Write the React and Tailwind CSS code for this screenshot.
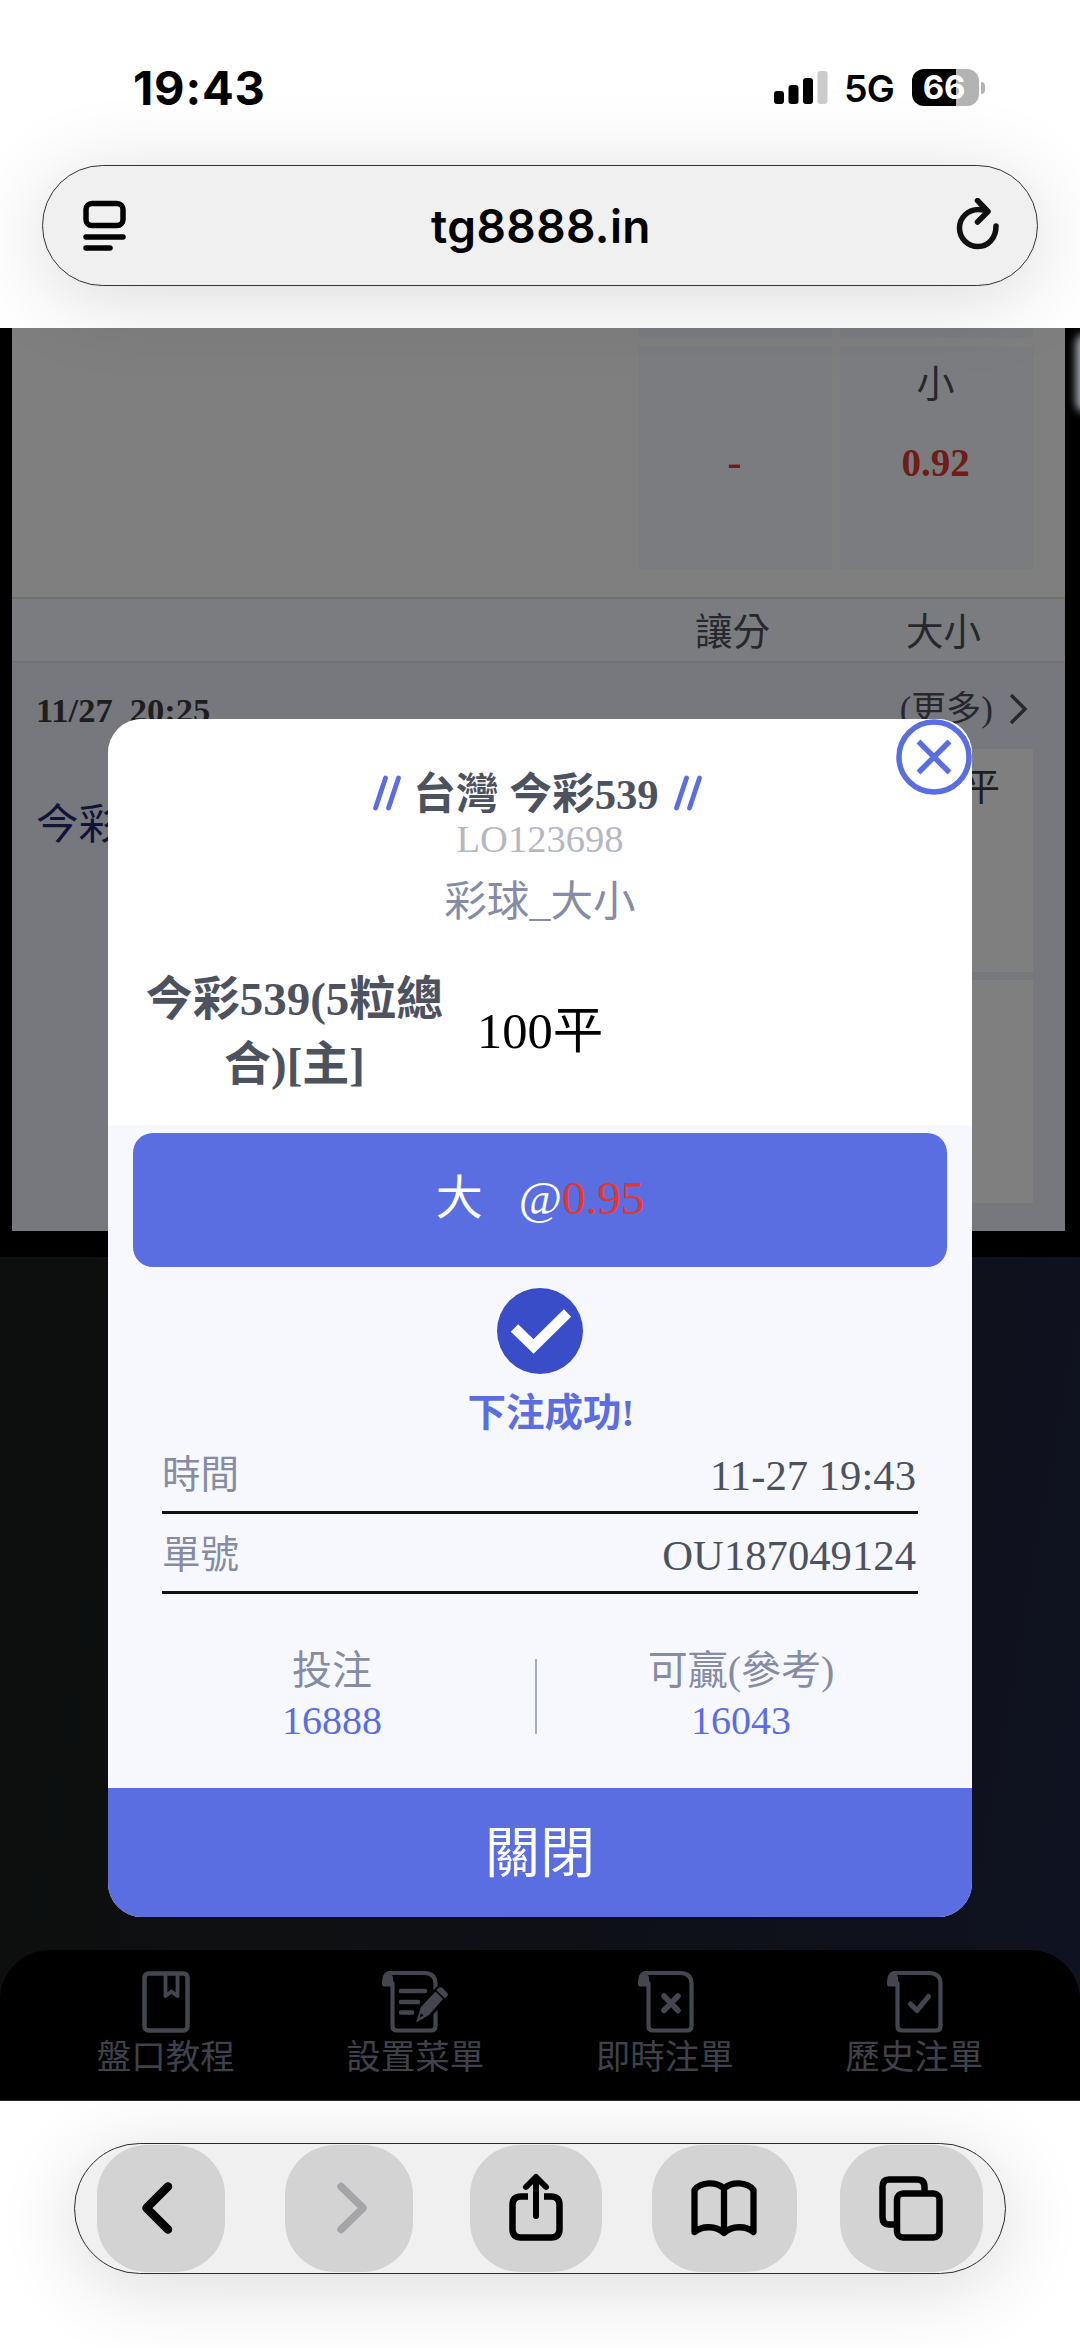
import React from "react";

const SERIF = "font-['Liberation_Serif','Noto_Sans_CJK_TC',serif]";

function StatusBar() {
  return (
    <div className="flex h-[165px] items-start justify-between pt-[60px] pr-[95px] pl-[133px]">
      <div className="text-[47px] leading-[55px] font-bold tracking-[0.8px]">19:43</div>
      <div className="flex h-[55px] items-center">
        <svg width="54" height="34" viewBox="0 0 54 34">
          <rect x="0" y="20" width="10" height="13" rx="3" />
          <rect x="14.500" y="14" width="10" height="19" rx="3" />
          <rect x="29" y="7" width="10" height="26" rx="3" />
          <rect x="43.500" y="0" width="10" height="33" rx="3" fill="#cbcbcb" />
        </svg>
        <div className="ml-[16px] w-[51px] pt-[2px] text-[37.500px] leading-[55px] font-semibold tracking-[-0.8px]">5G</div>
        <div className="ml-[17px] flex h-[37px] w-[67px] items-center justify-center rounded-[12px] bg-[linear-gradient(90deg,#000_66%,#b3b3b3_66%)] pr-[3px]">
          <span className="text-[33px] leading-[37px] font-bold tracking-[-0.2px] text-white">66</span>
        </div>
        <div className="ml-[2px] h-[12px] w-[4px] rounded-r-full bg-[#b3b3b3]" />
      </div>
    </div>
  );
}

function AddressBar() {
  return (
    <div className="mx-[42px] flex h-[121px] items-center justify-between rounded-full border-[1.5px] border-[#333] bg-[#f0f0f0] pr-[36px] pl-[40px] shadow-[0_12px_84px_rgba(0,0,0,0.15)]">
      <svg width="44" height="52" viewBox="0 0 44 52" fill="none" stroke="#000" strokeWidth="5.500" strokeLinecap="round">
        <rect x="3" y="3.500" width="37" height="22" rx="6" />
        <path d="M3 37H40M3 48H27" />
      </svg>
      <div className="pt-[1px] text-[46px] leading-[60px] font-semibold tracking-[0.4px]">tg8888.in</div>
      <svg width="46" height="56" viewBox="0 0 46 56" fill="none" stroke="#111" strokeWidth="5.500" strokeLinecap="round" strokeLinejoin="round">
        <path d="M30 12.500C27.800 11.800 25.500 11.500 23.500 11.500C13 11.500 4.500 19.700 4.500 30C4.500 40.500 13 48.500 23 48.500C33 48.500 41 40.500 41 28" />
        <path d="M22.500 2.500L33 13.500L22.500 24" />
      </svg>
    </div>
  );
}

function OddsCell({ label, children }) {
  return (
    <div className="flex h-[222px] w-[193px] flex-col items-center bg-[#f6f8ff] pt-[14px] pr-[2px]">
      <div className="h-[46px] text-[38px] leading-[46px] text-[#4d515c]">{label}</div>
      <div className="mt-[32px] text-[39px] leading-[47px] font-bold text-[#e03b2e]">{children}</div>
    </div>
  );
}

function BetPage() {
  return (
    <div className="mx-[12px] flex h-[903px] w-[1053px] flex-col bg-white">
      <div className="flex h-[269px] flex-col items-end gap-[9px] pr-[32px]">
        <div className="flex gap-[8px]">
          <div className="h-[10px] w-[193px] bg-[#f6f8ff]" />
          <div className="h-[10px] w-[193px] bg-[#f6f8ff]" />
        </div>
        <div className="flex gap-[8px]">
          <OddsCell label="">
            <span className="inline-block scale-x-110">-</span>
          </OddsCell>
          <OddsCell label="小">0.92</OddsCell>
        </div>
      </div>
      <div className="flex h-[66px] items-center justify-end border-y-[2px] border-[#e0e1eb] bg-[#f6f8fe] pt-[5px] pr-[84px] text-[37.500px] leading-[57px] text-[#4d515c]">
        <div>讓分</div>
        <div className="ml-[136px]">大小</div>
      </div>
      <div className="flex-1 bg-[#eff0fa]">
        <div className="flex h-[86px] items-center justify-between pt-[8px] pr-[37px] pl-[24px]">
          <div className="flex gap-[17px] text-[34.500px] leading-[40px] font-bold text-[#3c3d42]">
            <span>11/27</span>
            <span>20:25</span>
          </div>
          <div className="flex items-center text-[35px] leading-[40px] text-[#4d515c]">
            <span>(更多)</span>
            <svg className="-mt-[3px] ml-[16px]" width="19" height="34" viewBox="0 0 19 34" fill="none" stroke="#4d515c" strokeWidth="3.500">
              <path d="M2 3L16 17L2 31" />
            </svg>
          </div>
        </div>
        <div className="flex justify-between pr-[32px] pl-[24px]">
          <div className="pt-[50px] text-[42.500px] leading-[52px] text-[#1f2a70]">今彩539</div>
          <div className="flex flex-col gap-[8px]">
            <div className="h-[223px] w-[193px] bg-white pt-[14px] pr-[33px] text-right text-[37.500px] leading-[50px] text-[#3a3d45]">100平</div>
            <div className="h-[223px] w-[193px] bg-white" />
          </div>
        </div>
      </div>
    </div>
  );
}

function TutorialIcon() {
  return (
    <svg width="68" height="64" viewBox="0 0 68 64" fill="none" stroke="#43464f" strokeWidth="4.500">
      <rect x="12.500" y="3.500" width="43" height="57" rx="4" />
      <path d="M33.500 4V26L39.500 21.500L45.500 26V4" strokeWidth="3.800" strokeLinejoin="round" />
    </svg>
  );
}

function ScrollIcon({ mark }) {
  return (
    <svg width="68" height="64" viewBox="0 0 68 64" fill="none" stroke="#43464f" strokeWidth="4.200" strokeLinecap="round" strokeLinejoin="round">
      <path d="M9 3H44Q54 3.500 54.500 13V56Q54.500 60.500 50 60.500H16Q11.500 60.500 11.500 56V13" />
      <path d="M9 1C3 1 1 6 1 14Q1 16.500 3 16.500H12V7Z" fill="#43464f" stroke="none" />
      {mark === "pencil" && (
        <>
          <path d="M20 21H44M20 32H37M20 42.500H31" strokeWidth="4.600" />
          <path d="M36 51L41 37L57 19L66 27L49 44Z" fill="#000" stroke="#000" strokeWidth="5" />
          <path d="M35 52.500L40 37L54.500 21.500L62 29L48 45Z" fill="#43464f" stroke="none" />
          <path d="M57 18.500Q59.500 16 62 18.500L66 22.500Q68 25 65.500 27L64 28.500L55.500 20.500Z" fill="#43464f" stroke="none" />
          <path d="M38.500 47.500L40 43L42.500 45.500Z" fill="#000" stroke="none" />
        </>
      )}
      {mark === "cross" && <path d="M27 26L41 40.500M41 26L27 40.500" strokeWidth="5.500" />}
      {mark === "check" && <path d="M24.500 34L31 40.500L42.500 26.500" strokeWidth="5" />}
    </svg>
  );
}

function NavItem({ icon, label, nudge }) {
  return (
    <div className="flex flex-col items-center pt-[20px]">
      <div className={"h-[64px] " + nudge}>{icon}</div>
      <div className="mt-[3px] text-[34.500px] leading-[40px] text-[#3f414a]">{label}</div>
    </div>
  );
}

function AppNav() {
  return (
    <div className="grid h-[151px] grid-cols-4 rounded-t-[50px] border-b border-[#2a2a2c] bg-black pr-[41px] pl-[41px]">
      <NavItem icon={<TutorialIcon />} label="盤口教程" nudge="" />
      <NavItem icon={<ScrollIcon mark="pencil" />} label="設置菜單" nudge="" />
      <NavItem icon={<ScrollIcon mark="cross" />} label="即時注單" nudge="translate-x-[6px]" />
      <NavItem icon={<ScrollIcon mark="check" />} label="歷史注單" nudge="translate-x-[6px]" />
    </div>
  );
}

function Slashes() {
  return (
    <svg className="-mt-[4px]" width="30" height="36" viewBox="0 0 30 36" stroke="#5a6de1" strokeWidth="4.800" strokeLinecap="round">
      <path d="M3.500 33L13.500 3M16.500 33L26.500 3" />
    </svg>
  );
}

function DetailRow({ label, value }) {
  return (
    <div className="flex h-[80px] items-center justify-between border-b-[3px] border-[#111] pt-[7px] pr-[2px]">
      <span className="pb-[3px] text-[38.500px] leading-[50px] text-[#858ca3]">{label}</span>
      <span className="text-[42.700px] leading-[50px] text-[#4d525f]">{value}</span>
    </div>
  );
}

function Stat({ label, value }) {
  return (
    <div className="flex w-[406px] flex-col items-center text-[40px] leading-[50px]">
      <span className="text-[#858ca3]">{label}</span>
      <span className="text-[#5a6de1]">{value}</span>
    </div>
  );
}

function BetDialog() {
  return (
    <div className="absolute top-[391px] left-[108px] flex h-[1198px] w-[864px] flex-col overflow-hidden rounded-[34px] bg-[#f7f8fe]">
      <div className="h-[406px] bg-white pt-[54px]">
        <div className="flex h-[43px] items-center justify-center pr-[5px] text-[42.700px] leading-[43px] font-bold text-[#4d525f]">
          <Slashes />
          <span className="mr-[14px] ml-[11px]">台灣 今彩539</span>
          <Slashes />
        </div>
        <div className="text-center text-[38.500px] leading-[46px] text-[#b5b7c3]">LO123698</div>
        <div className="text-center text-[42.500px] leading-[80px] text-[#858ca3]">彩球_大小</div>
        <div className="mt-[25px] flex items-center pl-[25px]">
          <div className="w-[323px] text-center text-[47px] leading-[65px] font-bold text-[#4d525f]">
            今彩539(5粒總
            <br />
            合)[主]
          </div>
          <div className="ml-[21px] pb-[3px] text-[50.500px] leading-[60px] text-black">100平</div>
        </div>
      </div>
      <div className="mx-[25px] mt-[8px] flex h-[134px] items-center justify-center rounded-[20px] bg-[#5a6de1] pb-[4px] text-[47px] leading-[60px] text-white">
        <span className="mr-[36px]">大</span>
        <span>@</span>
        <span className="text-[#e8352a]">0.95</span>
      </div>
      <svg className="mx-auto mt-[21px] block shrink-0" width="86" height="86" viewBox="0 0 86 86">
        <circle cx="43" cy="43" r="43" fill="#3a4dc8" />
        <path d="M17.500 40L36.500 58.500L70.500 25" fill="none" stroke="#fff" strokeWidth="10.500" />
      </svg>
      <div className="mt-[19px] h-[40px] pl-[22px] text-center text-[38.500px] leading-[41px] font-bold text-[#5a6de1]">下注成功!</div>
      <div className="mx-[54px] mt-[1px]">
        <DetailRow label="時間" value="11-27 19:43" />
        <DetailRow label="單號" value="OU187049124" />
      </div>
      <div className="mr-[22px] ml-[21px] mt-[52px] flex h-[142px]">
        <Stat label="投注" value="16888" />
        <div className="mt-[13px] mr-[1px] h-[75px] w-[2px] bg-[#a6abc9]" />
        <Stat label="可贏(參考)" value="16043" />
      </div>
      <button className="h-[129px] bg-[#5a6de1] pt-[3px] text-center text-[55px] leading-[126px] text-white">關閉</button>
      <svg className="absolute top-0 right-0" width="76" height="76" viewBox="0 0 76 76">
        <circle cx="38" cy="38" r="35" fill="#fff" stroke="#5a6de1" strokeWidth="5.500" />
        <path d="M22.500 22.500L53.500 53.500M53.500 22.500L22.500 53.500" stroke="#5a6de1" strokeWidth="5.500" />
      </svg>
    </div>
  );
}

function ToolButton({ className, children }) {
  return <div className={"flex h-[127px] shrink-0 items-center justify-center rounded-[50px] bg-[#d3d3d3] " + className}>{children}</div>;
}

function BrowserToolbar() {
  return (
    <div className="relative mx-[74px] mt-[42px] flex h-[131px] w-[932px] items-center rounded-full border-[1.5px] border-[#2c2c2c] bg-[#f0f0f0] pl-[22px] shadow-[0_12px_80px_rgba(0,0,0,0.15)]">
      <ToolButton className="w-[128px]">
        <svg className="-translate-x-[4px]" width="36" height="56" viewBox="0 0 36 56" fill="none" stroke="#000" strokeWidth="8.500" strokeLinecap="round" strokeLinejoin="round">
          <path d="M29 5.500L7.500 27L29 48.500" />
        </svg>
      </ToolButton>
      <ToolButton className="ml-[60px] w-[128px]">
        <svg className="translate-x-[4px]" width="36" height="56" viewBox="0 0 36 56" fill="none" stroke="#a5a5a8" strokeWidth="7.500" strokeLinecap="round" strokeLinejoin="round">
          <path d="M6 5.500L28 27L6 48.500" />
        </svg>
      </ToolButton>
      <ToolButton className="ml-[57px] w-[132px]">
        <svg className="-translate-y-[2px]" width="56" height="70" viewBox="0 0 56 70" fill="none" stroke="#000" strokeWidth="6.500" strokeLinecap="round" strokeLinejoin="round">
          <path d="M20 24.500H13Q4.500 24.500 4.500 33V57Q4.500 65.500 13 65.500H43Q51.500 65.500 51.500 57V33Q51.500 24.500 43 24.500H36" strokeLinecap="butt" />
          <path d="M28 44V5M18 15L28 5L38 15" strokeWidth="6" />
        </svg>
      </ToolButton>
      <ToolButton className="ml-[50px] w-[145px]">
        <svg className="-translate-x-[1px] -translate-y-[1px]" width="68" height="58" viewBox="0 0 68 58" fill="none" stroke="#000" strokeWidth="6.300" strokeLinecap="round" strokeLinejoin="round">
          <path d="M34 9.500C26.500 2.500 11 2.500 4.500 11V53C12 46.500 26 46.500 34 54C42 46.500 56 46.500 63.500 53V11C57 2.500 41.500 2.500 34 9.500V52" />
        </svg>
      </ToolButton>
      <ToolButton className="ml-[43px] w-[143px]">
        <svg className="-translate-x-[1px] -translate-y-[1px]" width="66" height="66" viewBox="0 0 66 66" fill="none" stroke="#000" strokeWidth="6.500">
          <path d="M46.500 16V12Q46.500 4.500 39 4.500H11Q4.500 4.500 4.500 12V42Q4.500 49.500 11 49.500H17" />
          <rect x="19" y="18.500" width="42.500" height="44" rx="6" />
        </svg>
      </ToolButton>
    </div>
  );
}

export default function App() {
  return (
    <div className="flex h-[2348px] w-[1080px] flex-col overflow-hidden bg-white font-['Inter',sans-serif] text-black">
      <header className="relative z-10 h-[328px]">
        <StatusBar />
        <AddressBar />
      </header>
      <main className={"relative flex h-[1773px] flex-col overflow-hidden bg-black " + SERIF}>
        <BetPage />
        <div className="mt-[26px] flex flex-1 flex-col justify-end bg-[linear-gradient(100deg,#0c0f0e,#0e0f11_35%,#0f1221)]">
          <AppNav />
        </div>
        <div className="absolute inset-x-0 top-0 h-[929px] bg-black/50" />
        <div className="absolute top-[6px] -right-[14px] h-[78px] w-[18px] rounded-full bg-[#a9adb8] blur-[4px]" />
        <BetDialog />
      </main>
      <BrowserToolbar />
    </div>
  );
}
